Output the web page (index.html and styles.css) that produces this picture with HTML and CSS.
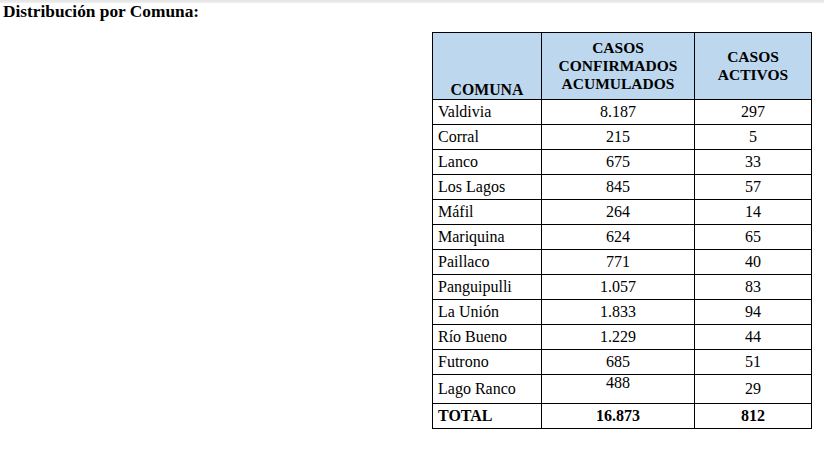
FILE: index.html
```html
<!DOCTYPE html>
<html lang="es">
<head>
<meta charset="utf-8">
<link rel="stylesheet" href="styles.css">
</head>
<body>
<div class="topband"></div>
<div class="title">Distribución por Comuna:</div>
<div class="wrap">
<table class="dist">
<colgroup><col class="c1"><col class="c2"><col class="c3"></colgroup>
<thead>
<tr><th class="comuna">COMUNA</th><th>CASOS<br>CONFIRMADOS<br>ACUMULADOS</th><th>CASOS<br>ACTIVOS</th></tr>
</thead>
<tbody>
<tr><td>Valdivia</td><td>8.187</td><td>297</td></tr>
<tr><td>Corral</td><td>215</td><td>5</td></tr>
<tr><td>Lanco</td><td>675</td><td>33</td></tr>
<tr><td>Los Lagos</td><td>845</td><td>57</td></tr>
<tr><td>Máfil</td><td>264</td><td>14</td></tr>
<tr><td>Mariquina</td><td>624</td><td>65</td></tr>
<tr><td>Paillaco</td><td>771</td><td>40</td></tr>
<tr><td>Panguipulli</td><td>1.057</td><td>83</td></tr>
<tr><td>La Unión</td><td>1.833</td><td>94</td></tr>
<tr><td>Río Bueno</td><td>1.229</td><td>44</td></tr>
<tr><td>Futrono</td><td>685</td><td>51</td></tr>
<tr class="tall"><td>Lago Ranco</td><td class="top">488</td><td>29</td></tr>
<tr class="total"><td>TOTAL</td><td>16.873</td><td>812</td></tr>
</tbody>
</table>
</div>
</body>
</html>
```

FILE: styles.css
```css
html, body {
  margin: 0;
  padding: 0;
  background: #ffffff;
}
body {
  font-family: "Liberation Serif", Tinos, "Times New Roman", serif;
  color: #000;
}
.topband {
  height: 3px;
  background: linear-gradient(#e4e4e4, #f0f0f0);
}
.title {
  font-weight: bold;
  font-size: 17.33px;
  line-height: 17px;
  padding-left: 3px;
}
.wrap {
  display: flex;
  justify-content: flex-end;
  padding-right: 12px;
  margin-top: 12px;
}
.dist {
  border-collapse: collapse;
  table-layout: fixed;
  width: 380px;
  font-size: 16px;
}
.c1 { width: 109px; }
.c2 { width: 153px; }
.c3 { width: 117px; }
.dist th, .dist td {
  border: 1px solid #000;
  padding: 0 5px;
}
.dist th {
  background: #bdd7ee;
  font-weight: bold;
  font-size: 15.5px;
  height: 66px;
  line-height: 18px;
  text-align: center;
  vertical-align: middle;
}
.dist th.comuna {
  vertical-align: bottom;
  font-size: 15.8px;
}
.dist td {
  height: 24px;
  line-height: 18px;
  text-align: center;
  vertical-align: middle;
}
.dist td:first-child {
  text-align: left;
}
.dist tr.tall td {
  height: 28px;
}
.dist td.top {
  vertical-align: top;
  line-height: 16px;
}
.dist tr.total td {
  font-weight: bold;
}
```
